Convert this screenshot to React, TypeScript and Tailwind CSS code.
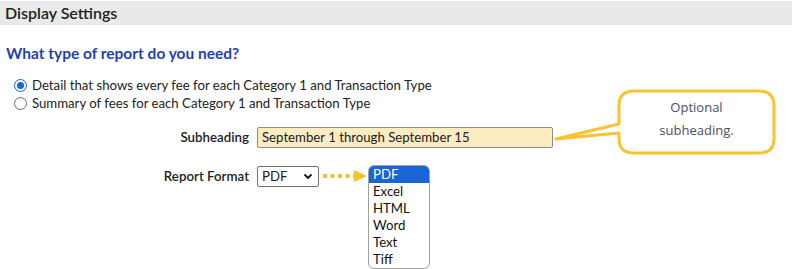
import React from "react";

function Radio({ checked }: { checked?: boolean }) {
  return (
    <span
      className={
        "inline-flex items-center justify-center w-[13px] h-[13px] rounded-full border " +
        (checked ? "border-[#1565d8]" : "border-[#6b6b6b]")
      }
    >
      {checked && <span className="w-[7px] h-[7px] rounded-full bg-[#1565d8]" />}
    </span>
  );
}

export default function App() {
  const items = ["PDF", "Excel", "HTML", "Word", "Text", "Tiff"];
  return (
    <div
      className="relative w-[796px] h-[269px] bg-white overflow-hidden text-[#222]"
      style={{ fontFamily: "Lato, 'Open Sans', sans-serif" }}
    >
      <div className="mt-[1px] h-[24px] w-[792px] bg-[#e9e9e9] pl-[5px] text-[16px] font-semibold leading-[24px] text-[#222]">
        Display Settings
      </div>
      <div className="mt-[19px] pl-[6px] text-[15.5px] font-bold leading-[18px] text-[#1f3fb5]">
        What type of report do you need?
      </div>
      <div className="mt-[14px] pl-[14px] flex flex-col text-[13.2px] leading-[18px] text-[#222]">
        <div className="flex items-center gap-[5px]">
          <Radio checked />
          <span>Detail that shows every fee for each Category 1 and Transaction Type</span>
        </div>
        <div className="flex items-center gap-[5px]">
          <Radio />
          <span>Summary of fees for each Category 1 and Transaction Type</span>
        </div>
      </div>
      <div className="mt-[15px] flex items-center">
        <div className="w-[250px] text-right pr-[1px] text-[13.3px] font-semibold">Subheading</div>
        <div className="ml-[7px] w-[296px] h-[21px] bg-[#fdebc1] border border-[#8a8a8a] rounded-[2px] pl-[4px] text-[13.2px] leading-[19px] text-[#222]">
          September 1 through September 15
        </div>
      </div>
      <div className="mt-[18px] flex items-center">
        <div className="w-[250px] text-right pr-[1px] text-[13.3px] font-semibold">Report Format</div>
        <div className="ml-[7px] w-[62px] h-[21px] border border-[#767676] rounded-[2px] pl-[4px] pr-[5px] flex items-center justify-between text-[13.2px]">
          <span>PDF</span>
          <svg width="10" height="7" viewBox="0 0 10 7">
            <path d="M1.5 1.5 L5 5 L8.5 1.5" stroke="#111" strokeWidth="1.8" fill="none" />
          </svg>
        </div>
      </div>

      {/* dotted arrow */}
      <svg className="absolute left-[320px] top-[169px]" width="50" height="16" viewBox="0 0 50 16">
        <line x1="3" y1="7" x2="34" y2="7" stroke="#f6c22b" strokeWidth="4" strokeDasharray="4 3.5" />
        <polygon points="34,1 47,7 34,13" fill="#f6c22b" />
      </svg>

      {/* open list */}
      <div className="absolute left-[368px] top-[165px] w-[62px] h-[104px] border border-[#a0a0a0] rounded-[6px] bg-white overflow-hidden flex flex-col text-[13.2px] leading-[17px] text-[#111]">
        {items.map((it, i) => (
          <div key={it} className={"pl-[4px] h-[17px] " + (i === 0 ? "bg-[#1a65d6] text-white" : "")}>
            {it}
          </div>
        ))}
      </div>

      {/* callout */}
      <svg className="absolute left-[550px] top-[85px]" width="232" height="75" viewBox="0 0 232 75">
        <path
          d="M84 6 H209 Q224 6 224 21 V54 Q224 68 209 68 H84 Q69 68 69 54 V48 L6 54 L69 39 V21 Q69 6 84 6 Z"
          fill="white"
          stroke="#fbc230"
          strokeWidth="3"
          strokeLinejoin="round"
        />
      </svg>
      <div
        className="absolute left-[619px] top-[92px] w-[155px] text-center text-[13px] leading-[23px] text-[#4a4e66]"
        style={{ fontFamily: "'Open Sans', sans-serif" }}
      >
        <div className="mt-[4px]">Optional</div>
        <div>subheading.</div>
      </div>
    </div>
  );
}
